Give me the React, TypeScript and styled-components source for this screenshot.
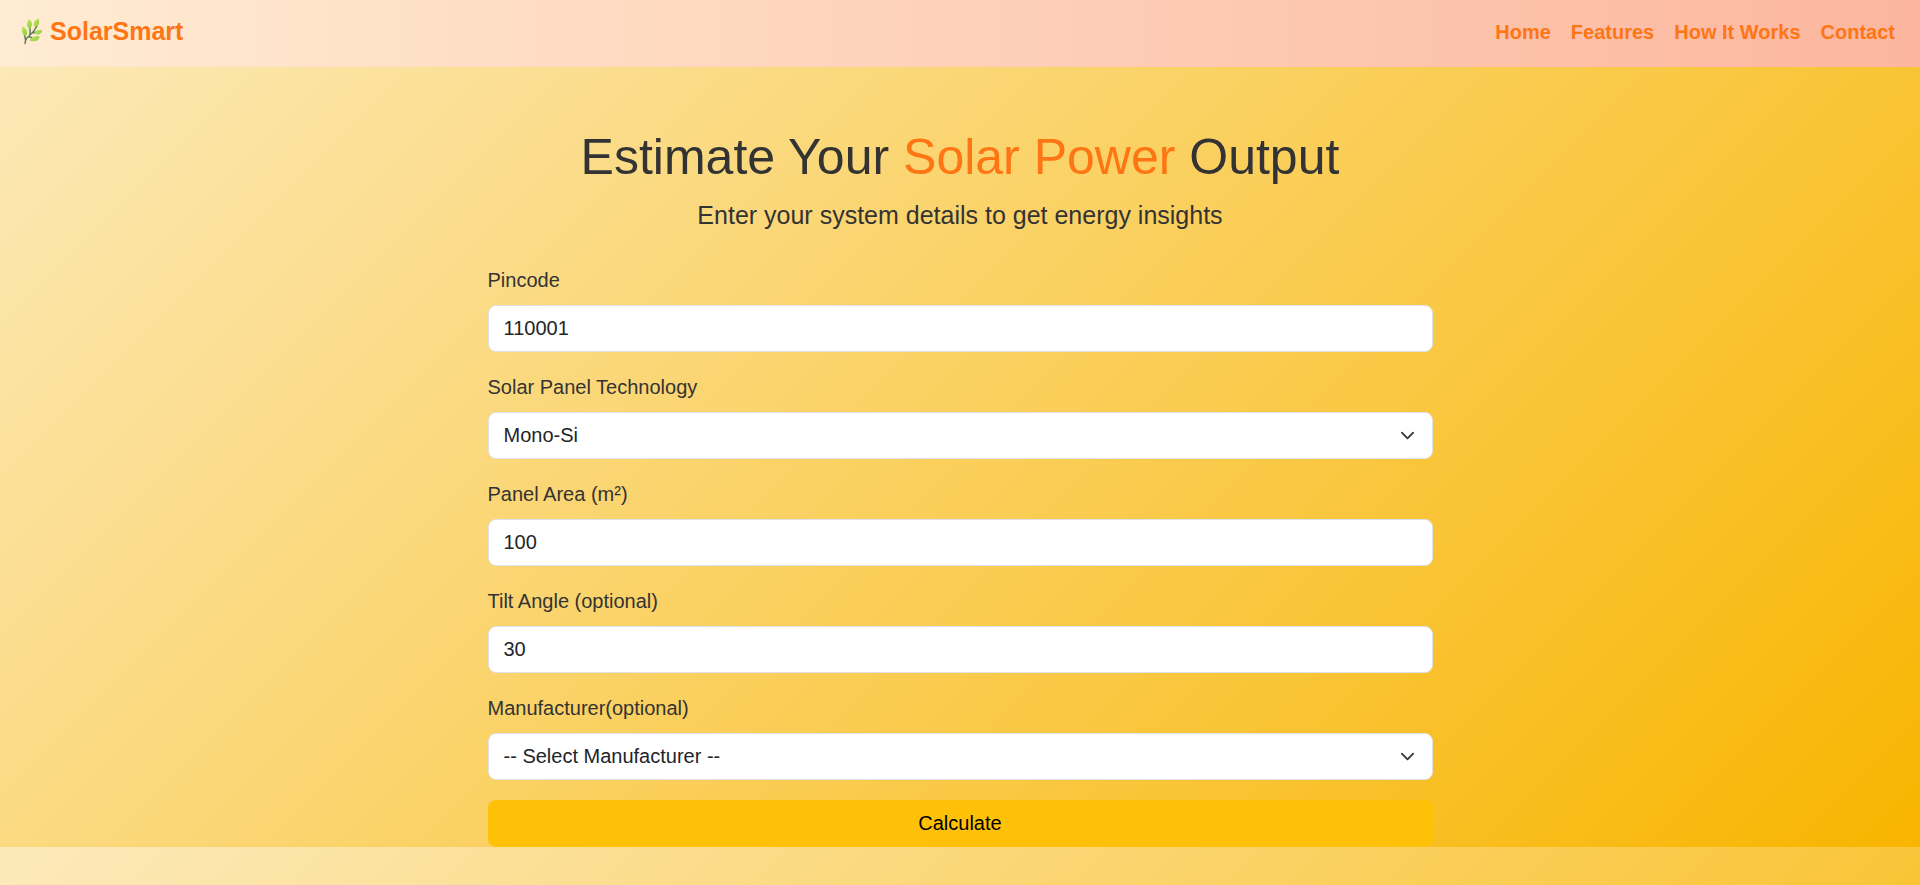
import React, { useState } from "react";
import styled, { createGlobalStyle } from "styled-components";

const ORANGE = "#ff7514";
const INK = "#333333";

const GlobalStyle = createGlobalStyle`
  *, *::before, *::after { box-sizing: border-box; }
  body {
    margin: 0;
    background: linear-gradient(135deg, #fceabb, #f8b500);
    color: ${INK};
    font-family: "Liberation Sans", Arial, sans-serif;
    font-size: 20px;
    line-height: 30px;
  }
`;

const Navbar = styled.nav`
  display: flex;
  flex-wrap: wrap;
  align-items: flex-start;
  justify-content: space-between;
  padding: 12px 15px;
  background: linear-gradient(90deg, #ffecd2, #fcb69f);
`;

const Brand = styled.a`
  display: flex;
  align-items: center;
  gap: 6px;
  padding: 0 5px 5px;
  color: ${ORANGE};
  font-size: 25px;
  font-weight: 700;
  line-height: 38px;
  text-decoration: none;
`;

const BrandName = styled.span`
  line-height: 38px;
`;

const NavList = styled.ul`
  display: flex;
  flex-wrap: wrap;
  margin: 0;
  padding: 5px 0;
  list-style: none;
`;

const NavLink = styled.a`
  display: block;
  padding: 0 10px;
  color: ${ORANGE};
  font-weight: 700;
  text-decoration: none;
`;

const Main = styled.main`
  max-width: 975px;
  margin: 0 auto;
  padding: 60px 15px 0;
`;

const Title = styled.h1`
  margin: 0 0 10px;
  font-size: 50px;
  font-weight: 400;
  line-height: 60px;
  text-align: center;
`;

const Highlight = styled.span`
  color: ${ORANGE};
`;

const Lead = styled.p`
  margin: 0 0 32px;
  font-size: 25px;
  line-height: 36px;
  text-align: center;
`;

const Form = styled.form`
  display: flex;
  flex-direction: column;
  gap: 20px;
`;

const Field = styled.div`
  display: flex;
  flex-direction: column;
  gap: 10px;
`;

const Control = styled.input`
  display: block;
  width: 100%;
  height: 47px;
  margin: 0;
  padding: 0 15px;
  border: 1px solid #dee2e6;
  border-radius: 8px;
  background: #ffffff;
  color: #212529;
  font: inherit;
  appearance: none;
`;

const SelectControl = styled(Control)`
  padding-bottom: 2px;
`;

const SelectBox = styled.div`
  position: relative;
`;

const Chevron = styled.svg`
  position: absolute;
  top: 16px;
  right: 18px;
  width: 15px;
  height: 15px;
  pointer-events: none;
`;

const SubmitButton = styled.button`
  height: 47px;
  padding: 0 15px 2px;
  border: 0;
  border-radius: 8px;
  background: #ffc107;
  color: #000000;
  font: inherit;
  cursor: pointer;
`;

function LeafIcon() {
  return (
    <svg width="24" height="27" viewBox="0 0 24 27" aria-hidden="true">
      <defs>
        <linearGradient id="leaf" x1="0" y1="0" x2="1" y2="1">
          <stop offset="0" stopColor="#c6ea5c" />
          <stop offset="1" stopColor="#8cc644" />
        </linearGradient>
      </defs>
      <path
        d="M5 25.500C5 22 6 20.500 9 18C13 14.500 15 12 17 8M5.500 21.500L4.500 17M10 17V9M12 15L17 14M9 18.500L12 20"
        fill="none"
        stroke="#5c7d52"
        strokeWidth="1.500"
        strokeLinecap="round"
      />
      <g fill="url(#leaf)">
        <path d="M2.500 8.500C1 11 1.500 16 5.500 18.500C8.500 15 7 10.500 2.500 8.500Z" />
        <path d="M9.500 1.500C6 4 6 8.500 9.500 11.500C12.500 8.500 12.500 4 9.500 1.500Z" />
        <path d="M18.500 .5C14 2 13 5.500 14.800 9.500C19 8 20 4.500 18.500 .5Z" />
        <path d="M22.500 12.500C19.500 11 16.500 12 14 15.500C17.500 17.500 21 16.500 22.500 12.500Z" />
        <path d="M20 18.500C16 17 12 18.500 9.500 22.200C13.500 24.500 18 23.500 20 18.500Z" />
      </g>
    </svg>
  );
}

type SelectFieldProps = { id: string; label: string; options: string[] };

function SelectField({ id, label, options }: SelectFieldProps) {
  const [value, setValue] = useState(options[0]);
  return (
    <Field>
      <label htmlFor={id}>{label}</label>
      <SelectBox>
        <SelectControl
          as="select"
          id={id}
          value={value}
          onChange={(e: React.ChangeEvent<any>) => setValue(e.target.value)}
        >
          {options.map((option) => (
            <option key={option}>{option}</option>
          ))}
        </SelectControl>
        <Chevron viewBox="0 0 16 16" aria-hidden="true">
          <path
            d="m2 5 6 6 6-6"
            fill="none"
            stroke="#343a40"
            strokeWidth="2"
            strokeLinecap="round"
            strokeLinejoin="round"
          />
        </Chevron>
      </SelectBox>
    </Field>
  );
}

type TextFieldProps = { id: string; label: string; initial: string };

function TextField({ id, label, initial }: TextFieldProps) {
  return (
    <Field>
      <label htmlFor={id}>{label}</label>
      <Control id={id} type="text" inputMode="numeric" defaultValue={initial} />
    </Field>
  );
}

const LINKS = [
  { label: "Home", href: "#home" },
  { label: "Features", href: "#features" },
  { label: "How It Works", href: "#how-it-works" },
  { label: "Contact", href: "#contact" },
];

export default function App() {
  return (
    <>
      <GlobalStyle />
      <Navbar>
        <Brand href="#home">
          <LeafIcon />
          <BrandName>SolarSmart</BrandName>
        </Brand>
        <NavList>
          {LINKS.map((link) => (
            <li key={link.label}>
              <NavLink href={link.href}>{link.label}</NavLink>
            </li>
          ))}
        </NavList>
      </Navbar>
      <Main>
        <Title>
          Estimate Your <Highlight>Solar Power</Highlight> Output
        </Title>
        <Lead>Enter your system details to get energy insights</Lead>
        <Form onSubmit={(e) => e.preventDefault()}>
          <TextField id="pincode" label="Pincode" initial="110001" />
          <SelectField
            id="technology"
            label="Solar Panel Technology"
            options={["Mono-Si", "Poly-Si", "Thin Film"]}
          />
          <TextField id="area" label="Panel Area (m²)" initial="100" />
          <TextField id="tilt" label="Tilt Angle (optional)" initial="30" />
          <SelectField
            id="manufacturer"
            label="Manufacturer(optional)"
            options={["-- Select Manufacturer --"]}
          />
          <SubmitButton type="submit">Calculate</SubmitButton>
        </Form>
      </Main>
    </>
  );
}
